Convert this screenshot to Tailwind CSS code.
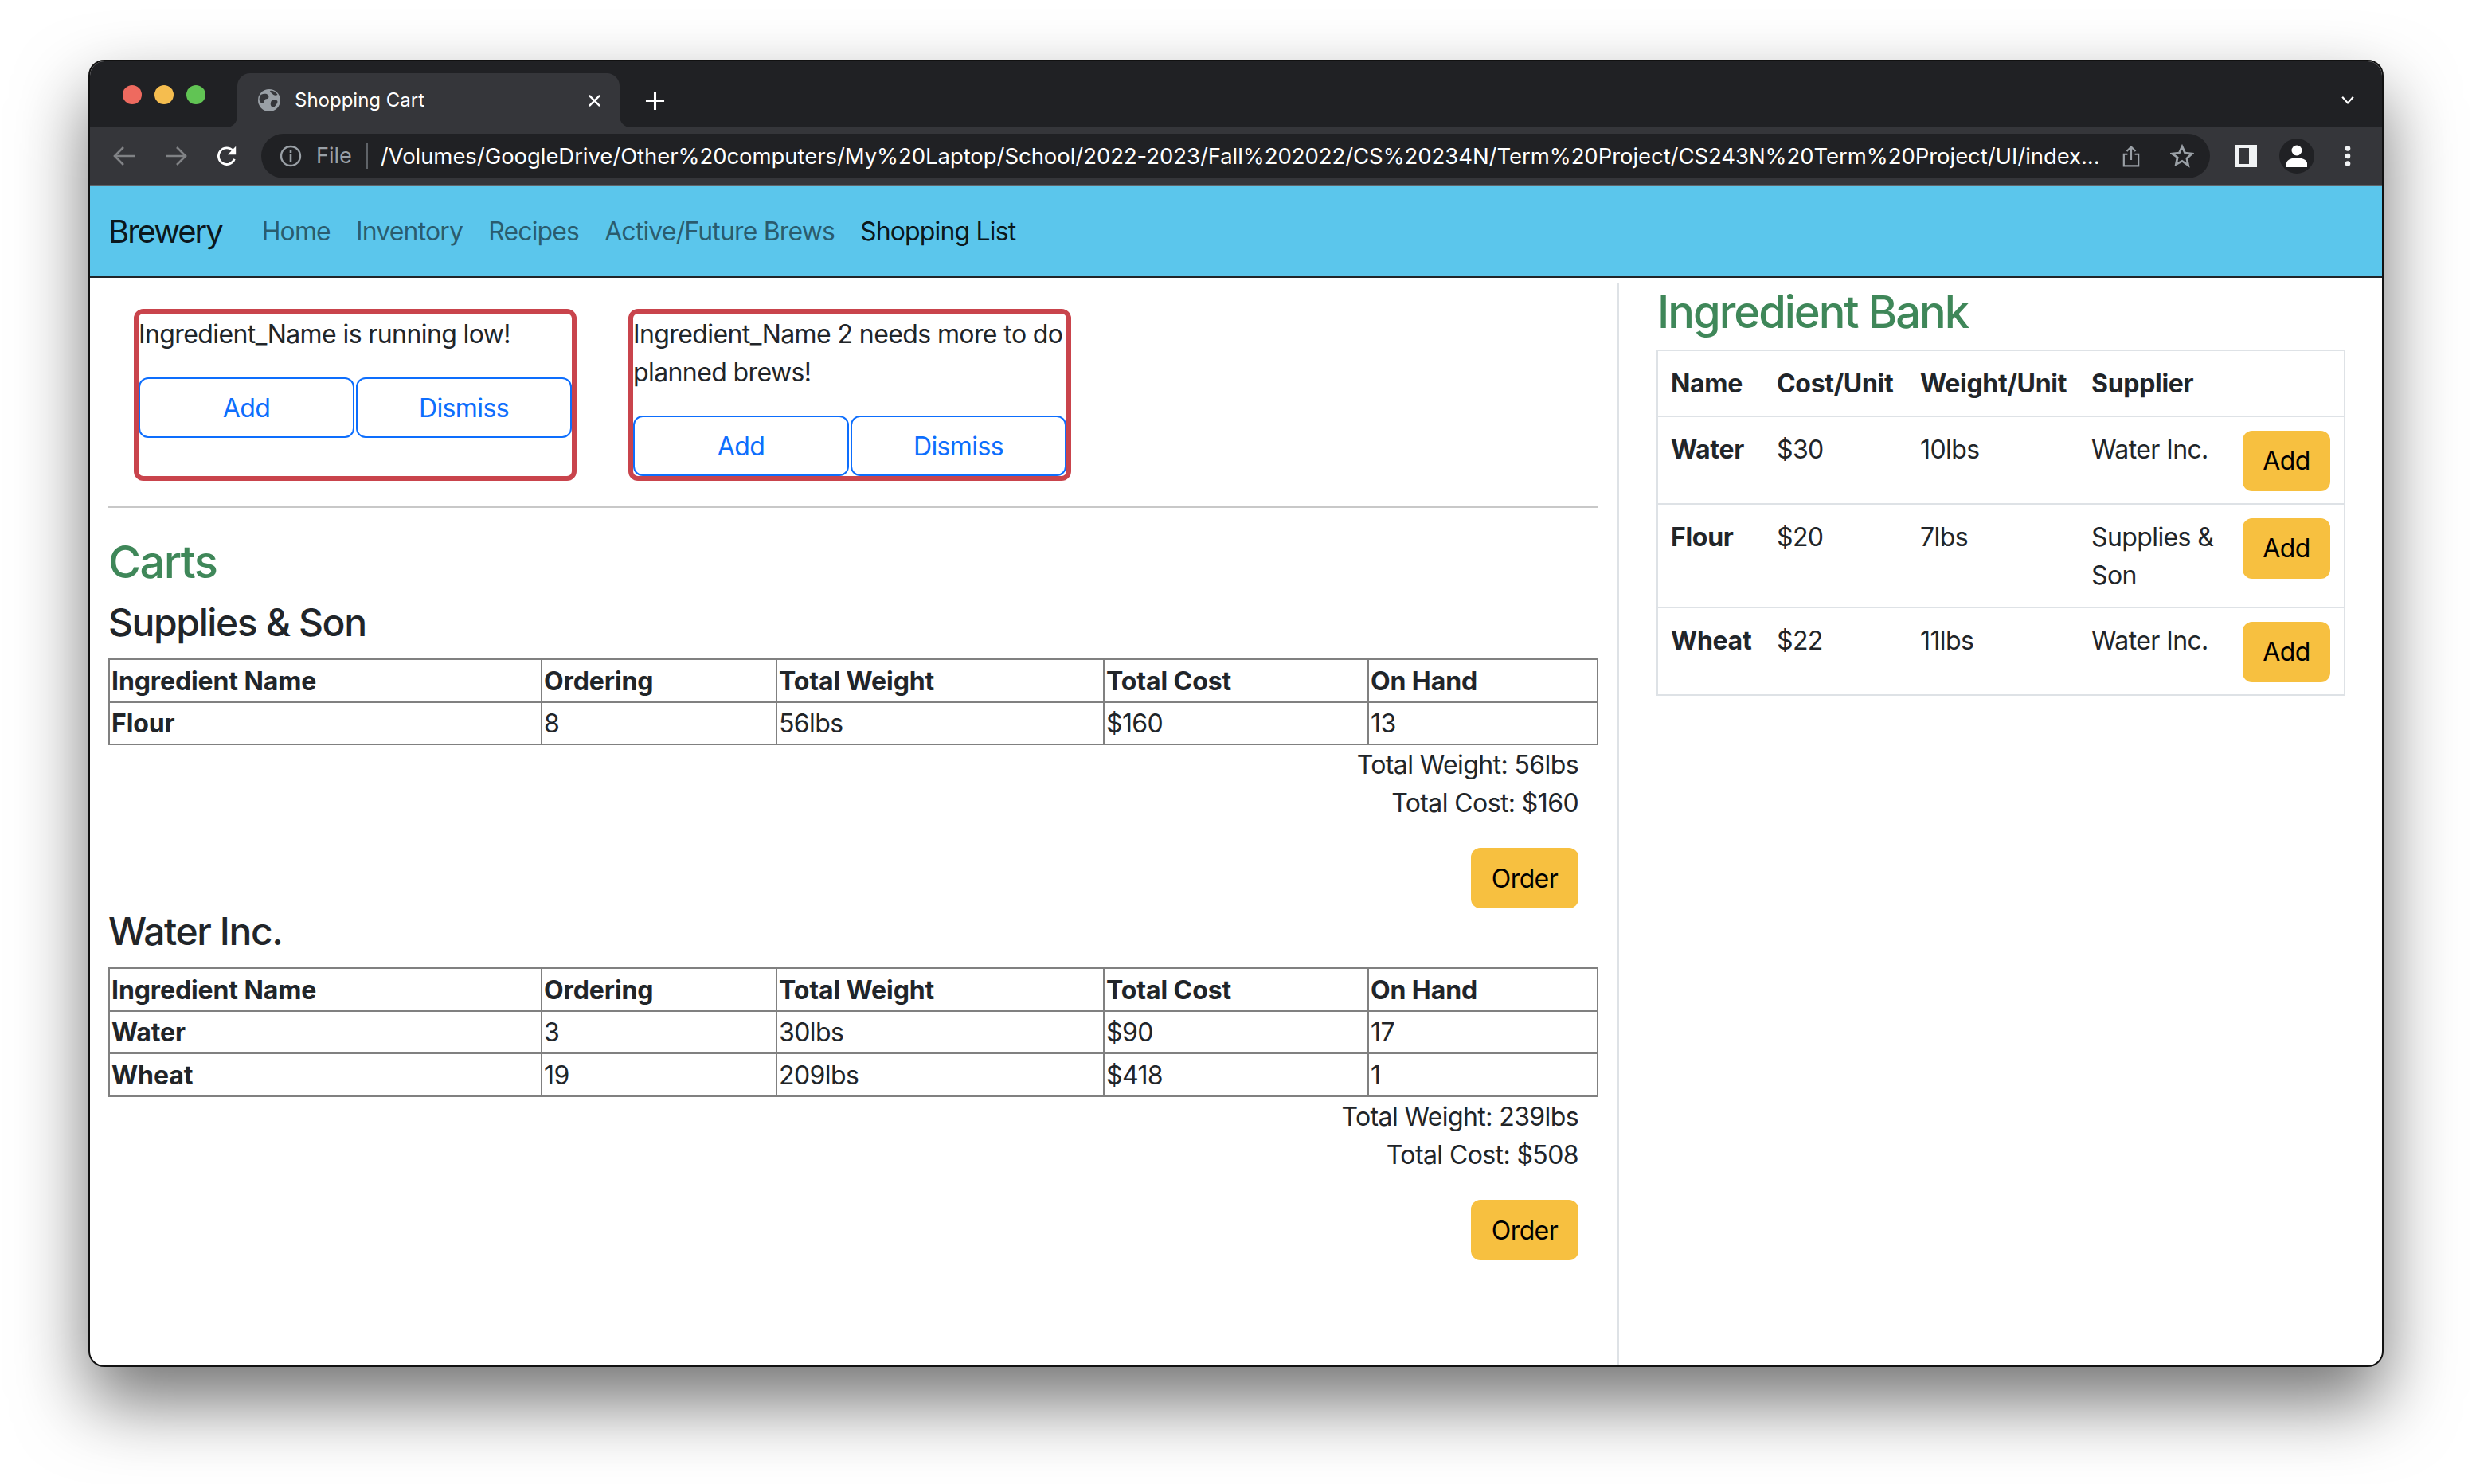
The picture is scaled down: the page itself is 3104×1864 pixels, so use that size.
<!DOCTYPE html>
<html lang="en">
<head>
    <meta charset="UTF-8">
    <title>Shopping Cart</title>
    <script src="https://cdn.jsdelivr.net/npm/@tailwindcss/browser@4"></script>
</head>
<body class="bg-white font-['Inter',sans-serif] text-[32px] tracking-[-0.6px] text-[#212529] overflow-hidden">
<div class="w-[3104px] h-[1864px] pt-[75px] pl-[111px]">
    <div class="w-[2882px] h-[1642px] rounded-[20px] overflow-hidden border-2 border-[#111] bg-white shadow-[0_44px_90px_rgba(0,0,0,0.55)] flex flex-col">
        <!-- tab strip -->
        <div class="h-[83px] shrink-0 bg-[#202124] flex items-end pl-[41px] pr-[34px] tracking-normal">
            <div class="self-start mt-[30px] flex gap-[16px] mr-[40px]">
                <span class="w-[24px] h-[24px] rounded-full bg-[#ee6a5f]"></span>
                <span class="w-[24px] h-[24px] rounded-full bg-[#f5bd4f]"></span>
                <span class="w-[24px] h-[24px] rounded-full bg-[#61c454]"></span>
            </div>
            <div class="relative w-[480px] h-[68px] bg-[#35363a] rounded-t-[16px] flex items-center pl-[26px] pr-[23px] text-white text-[24px]">
                <div class="absolute bottom-0 left-[-14px] w-[14px] h-[14px] bg-[#35363a]"><div class="w-full h-full bg-[#202124] rounded-br-[14px]"></div></div>
                <div class="absolute bottom-0 right-[-14px] w-[14px] h-[14px] bg-[#35363a]"><div class="w-full h-full bg-[#202124] rounded-bl-[14px]"></div></div>
                <svg class="w-[28px] h-[28px] mr-[18px]" viewBox="0 0 16 16"><circle cx="8" cy="8" r="8" fill="#9aa0a6"/><path d="M2 4c2-1 4-1 5 0s1 3-1 3-1 3-3 3-3-3-1-6zM10 8c2-1 4 0 4 1s-2 4-3 4-2-1-2-2 0-2 1-3zM9 1c2 0 4 1 5 3-2 1-3 0-4-1S8 2 9 1z" fill="#35363a"/></svg>
                <span class="flex-1">Shopping Cart</span>
                <svg class="w-[17px] h-[17px]" viewBox="0 0 18 18"><path d="M2 2l14 14M16 2L2 16" stroke="#fff" stroke-width="2.6"/></svg>
            </div>
            <svg class="w-[25px] h-[25px] ml-[32px] mb-[21px]" viewBox="0 0 26 26"><path d="M13 1v24M1 13h24" stroke="#fff" stroke-width="3.2"/></svg>
            <svg class="w-[18px] h-[12px] ml-auto mb-[28px]" viewBox="0 0 20 14"><path d="M2 2l8 9 8-9" fill="none" stroke="#fff" stroke-width="2.6"/></svg>
        </div>
        <!-- toolbar -->
        <div class="h-[72px] shrink-0 bg-[#35363a] border-b-2 border-b-[#5f6368] box-content flex items-center pl-[29px] tracking-normal">
            <svg class="w-[28px] h-[26px] shrink-0" viewBox="0 0 28 26"><path d="M27 13H3M13 2L2 13l11 11" fill="none" stroke="#808285" stroke-width="2.6"/></svg>
            <svg class="w-[28px] h-[26px] ml-[37px] shrink-0" viewBox="0 0 28 26"><path d="M1 13h24M15 2l11 11-11 11" fill="none" stroke="#808285" stroke-width="2.6"/></svg>
            <svg class="w-[28px] h-[28px] ml-[36px] shrink-0" viewBox="0 0 30 30"><path d="M25 19a11 11 0 1 1-2-11" fill="none" stroke="#fff" stroke-width="3"/><path d="M27 2v11H16z" fill="#fff"/></svg>
            <div class="w-[2447px] h-[56px] ml-[29px] bg-[#202124] rounded-full flex items-center pl-[23px] pr-[20px] shrink-0">
                <svg class="w-[28px] h-[28px] shrink-0" viewBox="0 0 28 28"><circle cx="14" cy="14" r="12" fill="none" stroke="#9aa0a6" stroke-width="2.4"/><path d="M14 12v9M14 7v3" stroke="#9aa0a6" stroke-width="2.6"/></svg>
                <span class="text-[#9aa0a6] text-[27px] ml-[18px]">File</span>
                <span class="w-[2px] h-[32px] bg-[#5f6368] ml-[18px] mr-[16px] shrink-0"></span>
                <span class="text-white text-[27.5px] tracking-[-0.06px] whitespace-nowrap flex-1 min-w-0 pt-[1px]">/Volumes/GoogleDrive/Other%20computers/My%20Laptop/School/2022-2023/Fall%202022/CS%20234N/Term%20Project/CS243N%20Term%20Project/UI/index...</span>
                <svg class="w-[22px] h-[29px] shrink-0" viewBox="0 0 24 30"><path d="M7 12H2v16h20V12h-5M12 20V2M6 8l6-6 6 6" fill="none" stroke="#9aa0a6" stroke-width="2.4"/></svg>
                <svg class="w-[30px] h-[30px] ml-[38px] shrink-0" viewBox="0 0 24 24"><path d="M12 2.5l2.9 6.4 7 .8-5.2 4.7 1.4 6.9L12 17l-6.1 3.3 1.4-6.9L2.100 9.700l7-.8z" fill="none" stroke="#9aa0a6" stroke-width="2.200"/></svg>
            </div>
            <div class="w-[28px] h-[28px] ml-[31px] bg-[#f1f3f4] pl-[5px] py-[4px] pr-[10px] shrink-0"><div class="w-full h-full bg-[#35363a]"></div></div>
            <div class="w-[44px] h-[44px] ml-[28px] rounded-full bg-[#202124] flex items-center justify-center shrink-0">
                <svg class="w-[26px] h-[28px]" viewBox="0 0 26 28"><circle cx="13" cy="7" r="6.500" fill="#fff"/><path d="M0 28v-5c0-4 7-7 13-7s13 3 13 7v5z" fill="#fff"/></svg>
            </div>
            <svg class="w-[8px] h-[26px] ml-[38px] shrink-0" viewBox="0 0 8 26"><circle cx="4" cy="3.500" r="3.300" fill="#f1f3f4"/><circle cx="4" cy="13" r="3.300" fill="#f1f3f4"/><circle cx="4" cy="22.500" r="3.300" fill="#f1f3f4"/></svg>
        </div>
        <!-- navbar -->
        <nav class="h-[112px] shrink-0 bg-[#5bc6ec] border-b-2 border-b-[#212529] box-content flex items-center pl-[23px] pt-[1px] -mb-[1px] tracking-[-0.85px]">
            <a class="text-[40px] tracking-[-2px] text-black/90 mr-[34px]">Brewery</a>
            <a class="px-[16px] text-black/55">Home</a>
            <a class="px-[16px] text-black/55">Inventory</a>
            <a class="px-[16px] text-black/55">Recipes</a>
            <a class="px-[16px] text-black/55">Active/Future Brews</a>
            <a class="px-[16px] text-black/90">Shopping List</a>
        </nav>
        <!-- content -->
        <div class="flex-1 flex min-h-0">
            <div class="w-[1918px] shrink-0 pl-[23px] pr-[25px]">
                <div class="flex pt-[40px] pb-[32px] pl-[32px] gap-[65px] border-b-2 border-b-[#c8c8c8]">
                    <div class="w-[556px] h-[216px] border-[6px] border-[#c9444c] rounded-[12px]">
                        <p class="leading-[48px] mt-[2px] h-[78px]">Ingredient_Name is running low!</p>
                        <div class="flex gap-[2px]">
                            <button class="w-[271px] h-[76px] pt-[2px] border-2 border-[#0d6efd] rounded-[12px] text-[#0d6efd]">Add</button>
                            <button class="w-[271px] h-[76px] pt-[2px] border-2 border-[#0d6efd] rounded-[12px] text-[#0d6efd]">Dismiss</button>
                        </div>
                    </div>
                    <div class="w-[556px] h-[216px] border-[6px] border-[#c9444c] rounded-[12px]">
                        <p class="leading-[48px] mt-[2px] h-[126px] whitespace-nowrap">Ingredient_Name 2 needs more to do<br>planned brews!</p>
                        <div class="flex gap-[2px]">
                            <button class="w-[271px] h-[76px] pt-[2px] border-2 border-[#0d6efd] rounded-[12px] text-[#0d6efd]">Add</button>
                            <button class="w-[271px] h-[76px] pt-[2px] border-2 border-[#0d6efd] rounded-[12px] text-[#0d6efd]">Dismiss</button>
                        </div>
                    </div>
                </div>
                <h3 class="text-[56px] leading-[67px] tracking-[-1.6px] text-[#3f8759] font-medium mt-[35px]">Carts</h3>
                <h4 class="text-[48px] leading-[58px] tracking-[-1.4px] font-medium mt-[13px] mb-[16px]">Supplies &amp; Son</h4>
                <table class="w-[1869px] table-fixed border-collapse">
                    <colgroup><col class="w-[543px]"><col class="w-[295px]"><col class="w-[411px]"><col class="w-[332px]"><col class="w-[288px]"></colgroup>
                    <tbody>
                        <tr class="h-[53.5px]"><th class="border-2 border-[#808080] text-left px-[2px] pt-[2px] font-bold tracking-[-0.1px]">Ingredient Name</th><th class="border-2 border-[#808080] text-left px-[2px] pt-[2px] font-bold tracking-[-0.1px]">Ordering</th><th class="border-2 border-[#808080] text-left px-[2px] pt-[2px] font-bold tracking-[-0.1px]">Total Weight</th><th class="border-2 border-[#808080] text-left px-[2px] pt-[2px] font-bold tracking-[-0.1px]">Total Cost</th><th class="border-2 border-[#808080] text-left px-[2px] pt-[2px] font-bold tracking-[-0.1px]">On Hand</th></tr>
                        <tr class="h-[53.5px]"><th class="border-2 border-[#808080] text-left px-[2px] pt-[2px] font-bold tracking-[-0.1px]">Flour</th><td class="border-2 border-[#808080] px-[2px] pt-[2px]">8</td><td class="border-2 border-[#808080] px-[2px] pt-[2px]">56lbs</td><td class="border-2 border-[#808080] px-[2px] pt-[2px]">$160</td><td class="border-2 border-[#808080] px-[2px] pt-[2px]">13</td></tr>
                    </tbody>
                </table>
                <div class="text-right pr-[24px] leading-[48px] mt-[1px]">
                    <p>Total Weight: 56lbs</p>
                    <p>Total Cost: $160</p>
                    <button class="block ml-auto mt-[32px] w-[135px] h-[76px] pt-[2px] bg-[#f7c040] rounded-[12px] text-black">Order</button>
                </div>
                <h4 class="text-[48px] leading-[58px] tracking-[-1.4px] font-medium mb-[16px]">Water Inc.</h4>
                <table class="w-[1869px] table-fixed border-collapse">
                    <colgroup><col class="w-[543px]"><col class="w-[295px]"><col class="w-[411px]"><col class="w-[332px]"><col class="w-[288px]"></colgroup>
                    <tbody>
                        <tr class="h-[53.5px]"><th class="border-2 border-[#808080] text-left px-[2px] pt-[2px] font-bold tracking-[-0.1px]">Ingredient Name</th><th class="border-2 border-[#808080] text-left px-[2px] pt-[2px] font-bold tracking-[-0.1px]">Ordering</th><th class="border-2 border-[#808080] text-left px-[2px] pt-[2px] font-bold tracking-[-0.1px]">Total Weight</th><th class="border-2 border-[#808080] text-left px-[2px] pt-[2px] font-bold tracking-[-0.1px]">Total Cost</th><th class="border-2 border-[#808080] text-left px-[2px] pt-[2px] font-bold tracking-[-0.1px]">On Hand</th></tr>
                        <tr class="h-[53.5px]"><th class="border-2 border-[#808080] text-left px-[2px] pt-[2px] font-bold tracking-[-0.1px]">Water</th><td class="border-2 border-[#808080] px-[2px] pt-[2px]">3</td><td class="border-2 border-[#808080] px-[2px] pt-[2px]">30lbs</td><td class="border-2 border-[#808080] px-[2px] pt-[2px]">$90</td><td class="border-2 border-[#808080] px-[2px] pt-[2px]">17</td></tr>
                        <tr class="h-[53.5px]"><th class="border-2 border-[#808080] text-left px-[2px] pt-[2px] font-bold tracking-[-0.1px]">Wheat</th><td class="border-2 border-[#808080] px-[2px] pt-[2px]">19</td><td class="border-2 border-[#808080] px-[2px] pt-[2px]">209lbs</td><td class="border-2 border-[#808080] px-[2px] pt-[2px]">$418</td><td class="border-2 border-[#808080] px-[2px] pt-[2px]">1</td></tr>
                    </tbody>
                </table>
                <div class="text-right pr-[24px] leading-[48px] mt-[1px]">
                    <p>Total Weight: 239lbs</p>
                    <p>Total Cost: $508</p>
                    <button class="block ml-auto mt-[32px] w-[135px] h-[76px] pt-[2px] bg-[#f7c040] rounded-[12px] text-black">Order</button>
                </div>
            </div>
            <div class="flex-1 border-l-2 border-l-[#dee2e6] pl-[47px] mt-[8px]">
                <h3 class="text-[56px] leading-[67px] tracking-[-2px] pl-[1px] pt-[3px] text-[#3f8759] font-medium">Ingredient Bank</h3>
                <table class="w-[863px] table-fixed border-collapse border-2 border-[#dee2e6] mt-[13px]">
                    <colgroup><col class="w-[134px]"><col class="w-[180px]"><col class="w-[215px]"><col class="w-[190px]"><col class="w-[144px]"></colgroup>
                    <tbody>
                        <tr class="h-[83px] border-b-2 border-b-[#dee2e6]"><th class="text-left pl-[16px] font-bold tracking-[-0.3px]">Name</th><th class="text-left pl-[16px] font-bold tracking-[-0.3px]">Cost/Unit</th><th class="text-left pl-[16px] font-bold tracking-[-0.3px]">Weight/Unit</th><th class="text-left pl-[16px] font-bold tracking-[-0.3px]">Supplier</th><th></th></tr>
                        <tr class="h-[110px] border-b-2 border-b-[#dee2e6] align-top"><th class="text-left pl-[16px] pt-[17px] leading-[48px] font-bold tracking-[-0.3px]">Water</th><td class="pl-[16px] pt-[17px] leading-[48px]">$30</td><td class="pl-[16px] pt-[17px] leading-[48px]">10lbs</td><td class="pl-[16px] pt-[17px] leading-[48px]">Water Inc.</td><td class="pl-[16px] pt-[17px]"><button class="block w-[110px] h-[76px] bg-[#f7c040] rounded-[12px] text-black">Add</button></td></tr>
                        <tr class="h-[130px] border-b-2 border-b-[#dee2e6] align-top"><th class="text-left pl-[16px] pt-[17px] leading-[48px] font-bold tracking-[-0.3px]">Flour</th><td class="pl-[16px] pt-[17px] leading-[48px]">$20</td><td class="pl-[16px] pt-[17px] leading-[48px]">7lbs</td><td class="pl-[16px] pt-[17px] leading-[48px]">Supplies &amp; Son</td><td class="pl-[16px] pt-[17px]"><button class="block w-[110px] h-[76px] bg-[#f7c040] rounded-[12px] text-black">Add</button></td></tr>
                        <tr class="h-[110px] align-top"><th class="text-left pl-[16px] pt-[17px] leading-[48px] font-bold tracking-[-0.3px]">Wheat</th><td class="pl-[16px] pt-[17px] leading-[48px]">$22</td><td class="pl-[16px] pt-[17px] leading-[48px]">11lbs</td><td class="pl-[16px] pt-[17px] leading-[48px]">Water Inc.</td><td class="pl-[16px] pt-[17px]"><button class="block w-[110px] h-[76px] bg-[#f7c040] rounded-[12px] text-black">Add</button></td></tr>
                    </tbody>
                </table>
            </div>
        </div>
    </div>
</div>
</body>
</html>
